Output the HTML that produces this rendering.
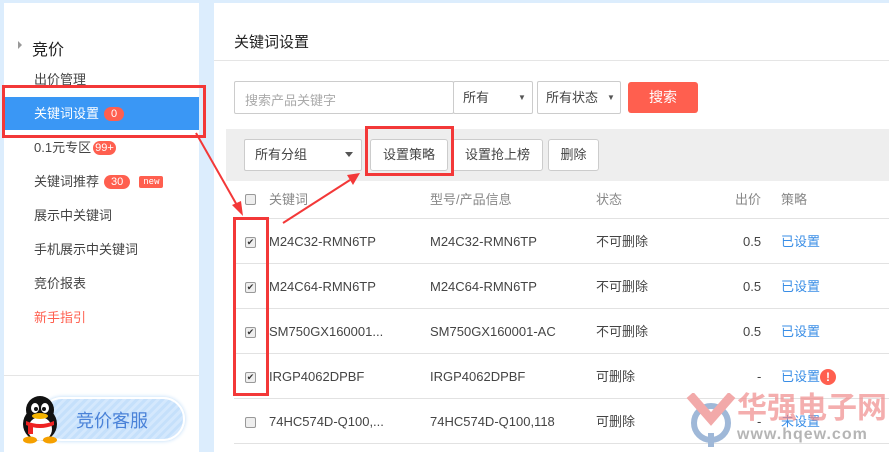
<!DOCTYPE html>
<html><head><meta charset="utf-8"><style>
*{margin:0;padding:0;box-sizing:border-box}
body{width:889px;height:452px;background:#dcedfd;position:relative;overflow:hidden;font-family:"Liberation Sans","Noto Sans CJK SC",sans-serif;font-size:13px;color:#333}
.a{position:absolute}
.lp{left:4px;top:3px;width:195px;height:449px;background:#fff}
.rp{left:214px;top:3px;width:675px;height:449px;background:#fff}
.mi{left:34px;font-size:13px;color:#444;line-height:16px}
.badge{display:inline-block;background:#ff5f4f;color:#fff;border-radius:8px;font-size:11px;line-height:14px;padding:0 7px;margin-left:5px;vertical-align:1px}
.box{border:1px solid #ccc;background:#fff;border-radius:2px}
.btn{border:1px solid #ccc;background:#fff;border-radius:3px;text-align:center;line-height:30px;font-size:13px;color:#444}
.cb{width:11px;height:11px;border:1px solid #999;border-radius:2px;background:#eee}
.row{left:234px;width:655px;height:1px;background:#e2e2e2}
.t{font-size:13px;color:#444;line-height:16px}
.blue{color:#3a8ee6}
.red{border:3px solid #f33838}
</style></head><body>
<div class="a lp"></div>
<div class="a rp"></div>
<div class="a" style="left:18px;top:41px;width:0;height:0;border-left:4px solid #999;border-top:4px solid transparent;border-bottom:4px solid transparent"></div>
<div class="a" style="left:32px;top:36px;font-size:16px;color:#222">竞价</div>
<div class="a mi" style="top:72px">出价管理</div>
<div class="a" style="left:4px;top:97px;width:195px;height:33px;background:#3a97f5"></div>
<div class="a mi" style="top:106px;color:#fff">关键词设置<span class="badge">0</span></div>
<div class="a mi" style="top:140px">0.1元专区<span class="badge" style="padding:0 2px;margin-left:2px">99+</span></div>
<div class="a mi" style="top:174px">关键词推荐<span class="badge">30</span><span style="display:inline-block;background:#ff5f4f;color:#fff;font-size:9px;line-height:12px;padding:0 4px;margin-left:9px;border-radius:2px;vertical-align:2px;font-family:'Liberation Mono',monospace">new</span></div>
<div class="a mi" style="top:208px">展示中关键词</div>
<div class="a mi" style="top:242px">手机展示中关键词</div>
<div class="a mi" style="top:276px">竞价报表</div>
<div class="a mi" style="top:310px;color:#ff5f4f">新手指引</div>
<div class="a" style="left:4px;top:375px;width:195px;height:1px;background:#e5e5e5"></div>
<div class="a" style="left:40px;top:397px;width:145px;height:44px;border-radius:22px;background:repeating-linear-gradient(135deg,#c5e0fb 0 3px,#d4e8fd 3px 6px);border:2px solid #fff;box-shadow:0 0 4px #b9d9f7"></div>
<div class="a" style="left:76px;top:407px;font-size:18px;color:#4a82d8;letter-spacing:0px">竞价客服</div>
<svg class="a" style="left:18px;top:394px" width="44" height="50" viewBox="0 0 44 50">
<ellipse cx="22" cy="30" rx="17" ry="17" fill="#111"/>
<ellipse cx="22" cy="16" rx="14" ry="14" fill="#111"/>
<ellipse cx="22" cy="35" rx="12" ry="12" fill="#fff"/>
<ellipse cx="17" cy="14" rx="4" ry="5" fill="#fff"/><ellipse cx="27" cy="14" rx="4" ry="5" fill="#fff"/>
<circle cx="18" cy="15" r="2" fill="#111"/><circle cx="26" cy="15" r="2" fill="#111"/>
<ellipse cx="22" cy="22" rx="8" ry="3" fill="#f5b400"/>
<path d="M8 27 Q22 33 36 27 L36 31 Q22 37 8 31Z" fill="#e22"/>
<rect x="10" y="30" width="5" height="10" fill="#e22"/>
<ellipse cx="12" cy="46" rx="7" ry="3.5" fill="#f5a000"/><ellipse cx="32" cy="46" rx="7" ry="3.5" fill="#f5a000"/>
</svg>

<div class="a" style="left:234px;top:31px;font-size:15px;color:#222">关键词设置</div>
<div class="a" style="left:214px;top:60px;width:675px;height:1px;background:#e5e5e5"></div>
<div class="a box" style="left:234px;top:81px;width:220px;height:33px"></div>
<div class="a" style="left:245px;top:90px;color:#aaa">搜索产品关键字</div>
<div class="a box" style="left:453px;top:81px;width:80px;height:33px"></div>
<div class="a t" style="left:463px;top:90px">所有</div>
<div class="a" style="left:518px;top:93px;font-size:8px;color:#555">▼</div>
<div class="a box" style="left:537px;top:81px;width:84px;height:33px"></div>
<div class="a t" style="left:546px;top:90px">所有状态</div>
<div class="a" style="left:607px;top:93px;font-size:8px;color:#555">▼</div>
<div class="a" style="left:628px;top:82px;width:70px;height:31px;background:#ff5f4f;border-radius:3px;color:#fff;text-align:center;line-height:31px;font-size:14px">搜索</div>

<div class="a" style="left:226px;top:129px;width:663px;height:52px;background:#eeeeee"></div>
<div class="a box" style="left:244px;top:139px;width:118px;height:32px"></div>
<div class="a t" style="left:255px;top:147px">所有分组</div>
<div class="a" style="left:345px;top:152px;width:0;height:0;border-top:5px solid #555;border-left:4px solid transparent;border-right:4px solid transparent"></div>
<div class="a btn" style="left:370px;top:139px;width:78px;height:32px">设置策略</div>
<div class="a btn" style="left:452px;top:139px;width:91px;height:32px">设置抢上榜</div>
<div class="a btn" style="left:548px;top:139px;width:51px;height:32px">删除</div>

<div class="a" style="left:234px;top:181px;width:655px;height:271px;background:#fff"></div>
<div class="a cb" style="left:245px;top:194px"></div>
<div class="a t" style="left:269px;top:192px;color:#888">关键词</div>
<div class="a t" style="left:430px;top:192px;color:#888">型号/产品信息</div>
<div class="a t" style="left:596px;top:192px;color:#888">状态</div>
<div class="a t" style="left:735px;top:192px;color:#888">出价</div>
<div class="a t" style="left:781px;top:192px;color:#888">策略</div>
<div class="a row" style="top:218px"></div>
<div class="a row" style="top:263px"></div>
<div class="a row" style="top:308px"></div>
<div class="a row" style="top:353px"></div>
<div class="a row" style="top:398px"></div>
<div class="a row" style="top:443px"></div>

<!-- rows -->
<div class="a cb" style="left:245px;top:237px;background:#eee;font-size:9px;line-height:9px;text-align:center">✔</div>
<div class="a t" style="left:269px;top:234px">M24C32-RMN6TP</div>
<div class="a t" style="left:430px;top:234px">M24C32-RMN6TP</div>
<div class="a t" style="left:596px;top:234px">不可删除</div>
<div class="a t" style="left:743px;top:234px">0.5</div>
<div class="a t blue" style="left:781px;top:234px">已设置</div>

<div class="a cb" style="left:245px;top:282px;font-size:9px;line-height:9px;text-align:center">✔</div>
<div class="a t" style="left:269px;top:279px">M24C64-RMN6TP</div>
<div class="a t" style="left:430px;top:279px">M24C64-RMN6TP</div>
<div class="a t" style="left:596px;top:279px">不可删除</div>
<div class="a t" style="left:743px;top:279px">0.5</div>
<div class="a t blue" style="left:781px;top:279px">已设置</div>

<div class="a cb" style="left:245px;top:327px;font-size:9px;line-height:9px;text-align:center">✔</div>
<div class="a t" style="left:269px;top:324px">SM750GX160001...</div>
<div class="a t" style="left:430px;top:324px">SM750GX160001-AC</div>
<div class="a t" style="left:596px;top:324px">不可删除</div>
<div class="a t" style="left:743px;top:324px">0.5</div>
<div class="a t blue" style="left:781px;top:324px">已设置</div>

<div class="a cb" style="left:245px;top:372px;font-size:9px;line-height:9px;text-align:center">✔</div>
<div class="a t" style="left:269px;top:369px">IRGP4062DPBF</div>
<div class="a t" style="left:430px;top:369px">IRGP4062DPBF</div>
<div class="a t" style="left:596px;top:369px">可删除</div>
<div class="a t" style="left:757px;top:369px">-</div>
<div class="a t blue" style="left:781px;top:369px">已设置</div>
<div class="a" style="left:820px;top:369px;width:16px;height:16px;border-radius:50%;background:#ff5f4f;color:#fff;font-size:12px;font-weight:bold;text-align:center;line-height:16px">!</div>

<div class="a cb" style="left:245px;top:417px"></div>
<div class="a t" style="left:269px;top:414px">74HC574D-Q100,...</div>
<div class="a t" style="left:430px;top:414px">74HC574D-Q100,118</div>
<div class="a t" style="left:596px;top:414px">可删除</div>
<div class="a t" style="left:757px;top:414px">-</div>
<div class="a t blue" style="left:781px;top:414px">未设置</div>

<!-- watermark -->
<svg class="a" style="left:686px;top:393px" width="50" height="55" viewBox="0 0 50 55">
<circle cx="25" cy="30" r="17" fill="none" stroke="#9fb8d8" stroke-width="6"/>
<path d="M4 2 L25 26 L46 2" fill="none" stroke="#f2a9a9" stroke-width="9"/>
<rect x="22" y="40" width="6" height="14" fill="#9fb8d8"/>
</svg>
<div class="a" style="left:737px;top:393px;font-size:30px;color:rgba(240,140,140,0.7);font-weight:bold;letter-spacing:0px;line-height:32px">华强电子网</div>
<div class="a" style="left:737px;top:426px;font-size:16px;color:rgba(150,150,150,0.7);font-weight:bold;letter-spacing:1px">www.hqew.com</div>

<!-- red annotations -->
<div class="a red" style="left:2px;top:85px;width:204px;height:53px"></div>
<div class="a red" style="left:233px;top:217px;width:36px;height:179px"></div>
<div class="a red" style="left:365px;top:126px;width:89px;height:50px"></div>
<svg class="a" style="left:0;top:0" width="889" height="452">
<line x1="196" y1="133" x2="238" y2="207" stroke="#f33838" stroke-width="2"/>
<polygon points="243,216 232,205 241,201" fill="#f33838"/>
<line x1="283" y1="223" x2="350" y2="180" stroke="#f33838" stroke-width="2"/>
<polygon points="360,173 347,175 353,185" fill="#f33838"/>
</svg>
</body></html>
